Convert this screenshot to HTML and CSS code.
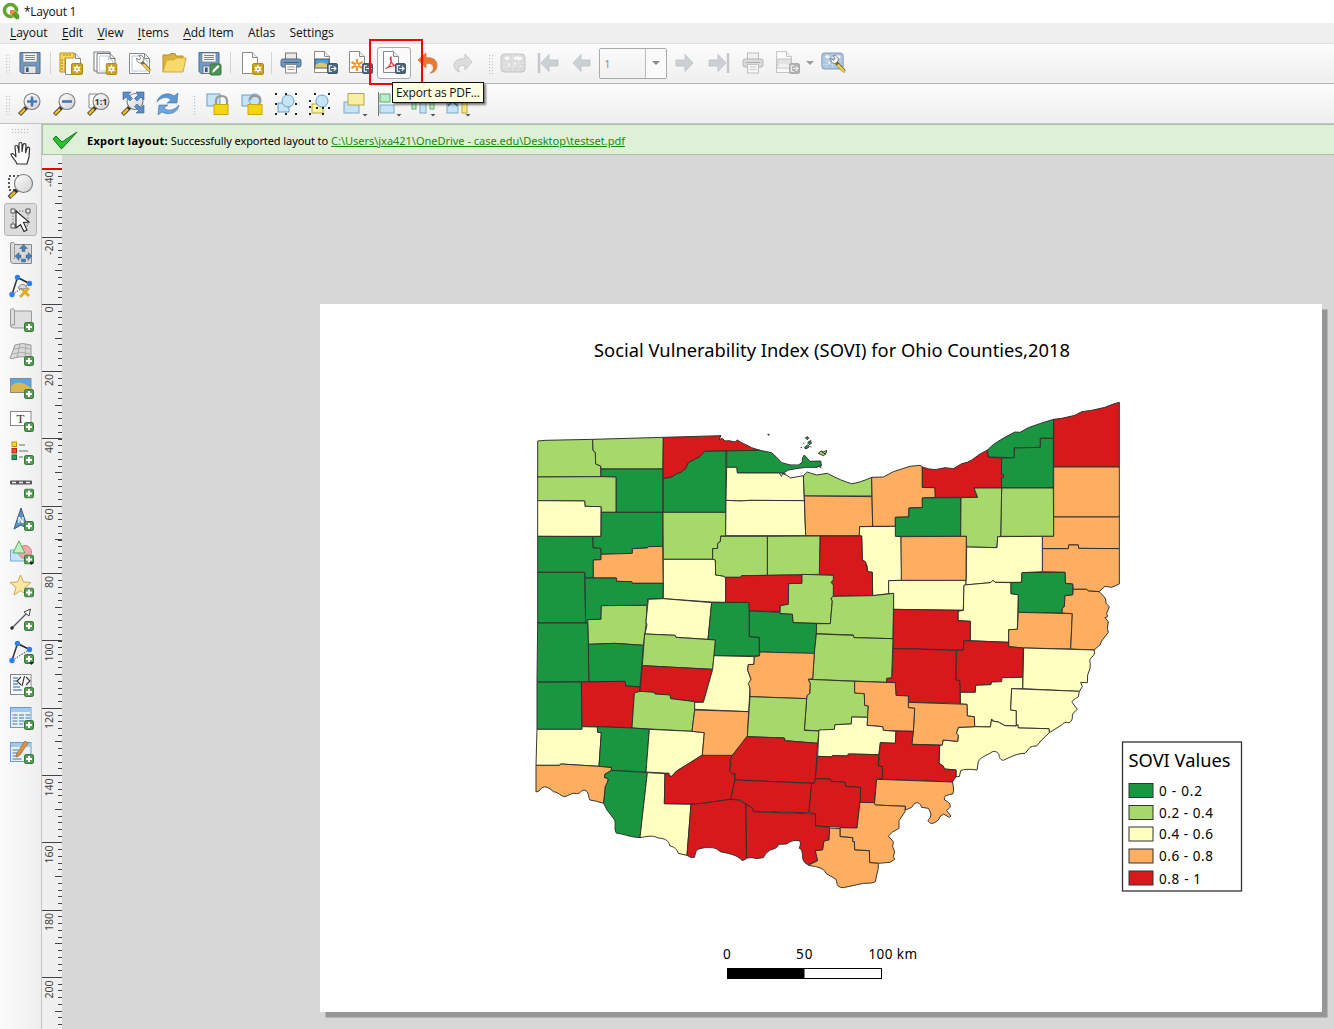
FILE: index.html
```html
<!DOCTYPE html>
<html lang="en">
<head>
<meta charset="utf-8">
<title>*Layout 1</title>
<link rel="stylesheet" href="styles.css">
</head>
<body>
<svg class="defs" width="0" height="0">
  <defs>
    <linearGradient id="glass" x1="0" y1="0" x2="1" y2="1"><stop offset="0" stop-color="#fff"/><stop offset="1" stop-color="#cfcfcf"/></linearGradient>
    <pattern id="dots" width="3" height="3" patternUnits="userSpaceOnUse"><rect width="1.200" height="1.200" fill="#c2c2c2"/></pattern>
    <symbol id="plus" viewBox="0 0 10 10"><rect x=".5" y=".5" width="9" height="9" rx="1.6" fill="#5a9a59" stroke="#39783a"/><path d="M5 2v6M2 5h6" stroke="#fff" stroke-width="2"/></symbol>
    <symbol id="star" viewBox="0 0 12 12"><rect x=".5" y=".5" width="11" height="11" rx="1.5" fill="#c9a31d" stroke="#b28e0e"/><path d="M6 1.6l1.1 2.5 2.8-.3L8.300 6l1.600 2.300-2.800-.3L6 10.500 4.900 8l-2.800.3L3.700 6 2.100 3.800l2.800.3z" fill="#fff"/><circle cx="6" cy="6" r="1" fill="#c9a31d"/></symbol>
    <symbol id="export" viewBox="0 0 12 12"><rect x=".5" y=".5" width="11" height="11" rx="1.8" fill="#49667f" stroke="#334f68"/><path d="M5.500 3H2.500v6h3M4.500 6h5M7.500 3.700L9.900 6 7.500 8.300" fill="none" stroke="#fff" stroke-width="1.200"/></symbol>
    <symbol id="sheet" viewBox="0 0 24 24"><path d="M3.500 1.500h10l5 5v16h-15z" fill="#fff" stroke="#8a8a8a"/><path d="M13.500 1.500v5h5" fill="#eee" stroke="#8a8a8a"/></symbol>
    <symbol id="floppy" viewBox="0 0 24 24"><path d="M2 1.500h20v21H4l-2-2z" fill="#6f9ac6" stroke="#4b6d91"/><rect x="5" y="2" width="14" height="9" fill="#f4f4f4" stroke="#777" stroke-width=".6"/><path d="M7 4.500h10M7 6.500h10M7 8.500h10" stroke="#777" stroke-width=".9"/><rect x="6" y="15" width="12" height="7.500" fill="#e4e4e4" stroke="#666" stroke-width=".7"/><rect x="8" y="16.500" width="2.600" height="4.500" fill="#345a86"/></symbol>
    <symbol id="lens" viewBox="0 0 24 24"><path d="M9 15l-7.500 7.500" stroke="#333" stroke-width="4"/><path d="M7 17l-5 5" stroke="#f2b927" stroke-width="2.500"/><circle cx="14" cy="9.500" r="8" fill="url(#glass)" stroke="#7b7b7b" stroke-width="1.100"/></symbol>
    <symbol id="nav" viewBox="0 0 24 24"><path d="M3 12l8-8.500v5.500h9v6h-9v5.500z" fill="#cbd0d3" stroke="#bbc0c3" stroke-width=".8"/></symbol>
    <symbol id="wrench" viewBox="0 0 24 24"><path d="M9 8l10 11" stroke="#77681f" stroke-width="4.200" stroke-linecap="round"/><path d="M13 13l6 6.500" stroke="#eed35c" stroke-width="2.700" stroke-linecap="round"/><path d="M4 5l3.500 2 1.500-2-2-3.500c4-.5 7 3 5.500 6.500L11 10c-3 2.500-7-.5-7-5z" fill="#f2f2f2" stroke="#666" stroke-width=".9"/></symbol>
    <symbol id="atlas" viewBox="0 0 26 20"><rect x="1" y="1" width="24" height="18" rx="3" fill="currentColor" stroke="#7d8fa0"/><path d="M1.500 6h23M1.500 10h23M1.500 14h23M7 1.500v17M13 1.500v17M19 1.500v17" stroke="#fff" opacity=".5" stroke-width=".6"/><path d="M3.500 4.500l3-1.500 4 .5-1 2.500-2 2-2-1zM8 9.500l3 1-1.500 5-1.500-3zM13 4.500l3-1.500 6 .5.500 2.500-3 2.500-2-1.500-3 .5zM13.500 8.500l3 .5-.5 5-1.500-1.500zM20 12l2.500 1-1 2-2-1z" fill="#fff" stroke="#7d8fa0" stroke-width=".4" opacity=".9"/></symbol>
    <symbol id="printer" viewBox="0 0 24 24"><rect x="6.500" y="2" width="11" height="8" fill="#e9e9e9" stroke="#777"/><rect x="2" y="8" width="20" height="8" rx="2" fill="currentColor" stroke="#55697d"/><path d="M4.500 11.500h15" stroke="#435d7a"/><rect x="6.500" y="13.500" width="11" height="8.500" fill="#fafafa" stroke="#888"/><path d="M8.500 16h7M8.500 18.500h7" stroke="#999"/></symbol>
    <symbol id="nodes" viewBox="0 0 24 24"><path d="M3 20.500L8.500 3.500" stroke="#333" stroke-width="1.500"/><path d="M8.500 3.500l12 6" stroke="#222" stroke-width="1.500"/><path d="M3 20.500l17.500-11" stroke="#444" stroke-dasharray="1.500 1.300"/><g fill="#2d7ef0"><circle cx="8.500" cy="3.500" r="2.700"/><circle cx="20.500" cy="9.500" r="2.700"/><circle cx="3" cy="20.500" r="2.700"/></g></symbol>
  </defs>
</svg>

<header class="title-bar">
  <svg class="logo" viewBox="0 0 18 18"><circle cx="8.500" cy="8.500" r="6" fill="none" stroke="#62a52f" stroke-width="3.600"/><path d="M8 8h4.500l5 5v4.500H14L8 11.500z" fill="#5a9c2c" stroke="#fff" stroke-width=".6"/><path d="M8 8h4l1.500 1.500-4 3.500L8 11.500z" fill="#ef8d2e"/></svg>
  <span>*Layout 1</span>
</header>
<nav class="menu">
  <span><u>L</u>ayout</span><span><u>E</u>dit</span><span><u>V</u>iew</span><span><u>I</u>tems</span><span><u>A</u>dd Item</span><span>Atlas</span><span>Settings</span>
</nav>

<div class="toolbar">
  <svg class="grip" viewBox="0 0 13 22"><path d="M5 1h5v21H5z" fill="url(#dots)"/></svg>
  <b class="btn"><svg viewBox="0 0 24 24"><use href="#floppy"/></svg></b>
  <i class="sep s1"></i>
  <b class="btn"><svg viewBox="0 0 24 24"><use href="#sheet" x="3" y="1"/><path d="M1 2h14v5H6v14H1z" fill="#f7d95f" stroke="#b9931c"/><path d="M5 3v2M8 3v2M11 3v2M2 9h2M2 12h2M2 15h2M2 18h2" stroke="#997b15"/><use href="#star" x="12" y="12" width="12" height="12"/></svg></b>
  <b class="btn"><svg viewBox="0 0 24 24"><path d="M1 1h16v19H1z" fill="#fff" stroke="#777"/><path d="M4 2.500h13l5 5V22H4z" fill="#fff" stroke="#777"/><path d="M6.500 5h9v4h4v11h-13z" fill="none" stroke="#bfd0e4"/><path d="M17 2.500v5h5" fill="none" stroke="#777"/><use href="#star" x="12.500" y="12" width="12" height="12"/></svg></b>
  <b class="btn"><svg viewBox="0 0 24 24"><path d="M1.500 2.500h15l5 5v15h-20z" fill="#fff" stroke="#888"/><path d="M4 5h11v4h4v11H4z" fill="none" stroke="#b3c9e2"/><path d="M16.500 2.500v5h5" fill="none" stroke="#888"/><use href="#wrench" x="5" y="3" width="20" height="20"/></svg></b>
  <b class="btn"><svg viewBox="0 0 24 24"><path d="M1 21V4h6l2-1.500h4L14 5h7v4" fill="#ddb13d" stroke="#b98f28"/><path d="M1 21L4.500 9H12l2-2h10l-3 14z" fill="#f7da6b" stroke="#d3a93a"/></svg></b>
  <b class="btn"><svg viewBox="0 0 24 24"><use href="#floppy"/><rect x="13" y="13" width="11" height="11" rx="1.500" fill="#4f9159" stroke="#39783a"/><path d="M15 22l1-3 5-5 1.500 1.500-5 5z" fill="#fff"/></svg></b>
  <i class="sep s2"></i>
  <b class="btn"><svg viewBox="0 0 24 24"><use href="#sheet" x="-1"/><use href="#star" x="12" y="12" width="12" height="12"/></svg></b>
  <i class="sep s3"></i>
  <b class="btn blue"><svg viewBox="0 0 24 24"><use href="#printer"/></svg></b>
  <b class="btn"><svg viewBox="0 0 24 24"><use href="#sheet" x="-2" y="-1"/><rect x="2" y="8" width="14" height="9" fill="#4aa0dd" stroke="#456"/><path d="M2.500 14q5-5 13 0v2.500h-13z" fill="#e6c65f"/><use href="#export" x="14" y="12" width="11" height="11"/></svg></b>
  <b class="btn"><svg viewBox="0 0 24 24"><use href="#sheet" x="-2" y="-1"/><path d="M9 8v12M3.500 11l11 6M14.500 11l-11 6" stroke="#f79420" stroke-width="2.200"/><circle cx="9" cy="14" r="1.300" fill="#fff"/><use href="#export" x="14" y="12" width="11" height="11"/></svg></b>
  <b class="btn pressed"><svg viewBox="0 0 24 24"><use href="#sheet" x="-2" y="-1"/><path d="M3.500 17.500c4-1 6.500-6 5.500-11.500-1.500 1 0 8.500 6 9-4-.8-8 .5-11.500 2.500z" fill="none" stroke="#e4313b" stroke-width="1.200"/><use href="#export" x="13" y="12" width="11" height="11"/></svg></b>
  <b class="btn"><svg viewBox="0 0 24 24"><path d="M2 9l8-7v4.500c8 0 11 3 11 7.500 0 5-3 8-7 8 3-2 4-4 3-7-1-2-3-3-7-2.500V17z" fill="#e57a35" stroke="#d26320" stroke-width=".6"/></svg></b>
  <b class="btn"><svg viewBox="0 0 24 24"><path d="M21 11l-7-8v4.500C7 7.500 3 10 3 14c0 4 2 6 6 7-2-2-2-4-1-5 1-1.500 3-2 6-1.500V19z" fill="#ddd" stroke="#c9c9c9"/></svg></b>
  <svg class="grip mid" viewBox="0 0 16 22"><path d="M8 1h5v21H8z" fill="url(#dots)"/></svg>
  <b class="btn faded"><svg class="wide" viewBox="0 0 26 20"><use href="#atlas" width="26" height="20"/></svg></b>
  <b class="btn"><svg viewBox="0 0 24 24"><path d="M3 2v20" stroke="#c3c8cb" stroke-width="2.500"/><use href="#nav" x="2"/></svg></b>
  <b class="btn"><svg viewBox="0 0 24 24"><use href="#nav"/></svg></b>
  <span class="combo"><span>1</span><i><em class="tri"></em></i></span>
  <b class="btn"><svg class="flip" viewBox="0 0 24 24"><use href="#nav"/></svg></b>
  <b class="btn"><svg class="flip" viewBox="0 0 24 24"><path d="M3 2v20" stroke="#c3c8cb" stroke-width="2.500"/><use href="#nav" x="2"/></svg></b>
  <b class="btn faded"><svg viewBox="0 0 24 24"><use href="#printer"/></svg></b>
  <b class="btn faded drop"><svg viewBox="0 0 24 24"><use href="#sheet" x="-2" y="-1"/><rect x="2" y="8" width="14" height="9" fill="#ccc" stroke="#888"/><path d="M2.500 15q5-5 13 0v1.500h-13z" fill="#eee"/><use href="#export" x="14" y="12" width="11" height="11"/></svg><em class="tri dark"></em></b>
  <b class="btn sky"><svg class="wide" viewBox="0 0 26 24"><use href="#atlas" x="0" y="1" width="23" height="18"/><use href="#wrench" x="6" y="3" width="21" height="21"/></svg></b>
</div>

<div class="toolbar second">
  <svg class="grip" viewBox="0 0 13 22"><path d="M5 1h5v21H5z" fill="url(#dots)"/></svg>
  <b class="btn"><svg viewBox="0 0 24 24"><use href="#lens"/><path d="M14 4.500v10M9 9.500h10" stroke="#4778b5" stroke-width="2.600"/></svg></b>
  <b class="btn"><svg viewBox="0 0 24 24"><use href="#lens"/><path d="M9 9.500h10" stroke="#4778b5" stroke-width="2.600"/></svg></b>
  <b class="btn"><svg viewBox="0 0 24 24"><path d="M2 2h10v14H2z" fill="#fff" stroke="#888"/><use href="#lens"/><text x="7.500" y="12.800" class="ratio">1:1</text></svg></b>
  <b class="btn"><svg viewBox="0 0 24 24"><use href="#lens"/><g fill="#5b8cc4" stroke="#315f96" stroke-width=".6"><path d="M2 0h8L7.500 2.500l4 4L9 9 5 5 2 8z"/><path d="M23 0h-8l2.500 2.500-4 4L16 9l4-4 3 3z"/><path d="M23 21h-8l2.500-2.500-4-4L16 12l4 4 3-3z"/></g></svg></b>
  <b class="btn"><svg viewBox="0 0 24 24"><path d="M1 10C2 3 12-1 18 4l4-3-1 10H11l4-3C11 4 5 5 1 10z" fill="#5b98d4" stroke="#3d74b1" stroke-width=".6"/><path d="M23 13c-1 8-11 11-17 7l-4 3 1-10h9l-4 3c4 4 11 2 15-3z" fill="#6da5dc" stroke="#3d74b1" stroke-width=".6"/></svg></b>
  <svg class="grip near" viewBox="0 0 15 22"><path d="M7 1h5v21H7z" fill="url(#dots)"/></svg>
  <b class="btn"><svg viewBox="0 0 24 24"><rect x="2" y="2" width="13" height="12" fill="#c5e4f8" stroke="#6a9fc8"/><path d="M11 13V9q0-5 5.500-5T22 9v4" fill="none" stroke="#999" stroke-width="2.200"/><rect x="9" y="12.500" width="14" height="10" fill="#f4d512" stroke="#c9a80f"/></svg></b>
  <b class="btn"><svg viewBox="0 0 24 24"><rect x="2" y="3" width="11" height="11" fill="#c5e4f8" stroke="#6a9fc8"/><circle cx="15" cy="8" r="6" fill="#c5e4f8" stroke="#6a9fc8"/><path d="M10 8q1-5 6-4t4 6l-1 3" fill="none" stroke="#999" stroke-width="2.200"/><rect x="8" y="12.500" width="14" height="10" fill="#f4d512" stroke="#c9a80f"/></svg></b>
  <b class="btn"><svg viewBox="0 0 24 24"><rect x="4" y="11" width="11" height="9" fill="#c5e4f8" stroke="#6a9fc8"/><circle cx="14" cy="9" r="6" fill="#c5e4f8" stroke="#6a9fc8"/><path d="M1 2h2M11 2h2M21 2h2M1 12h2M21 12h2M1 22h2M11 22h2M21 22h2" stroke="#222" stroke-width="1.800"/></svg></b>
  <b class="btn"><svg viewBox="0 0 24 24"><rect x="4" y="12" width="11" height="9" fill="#faf39a" stroke="#b5a64b"/><circle cx="14" cy="9" r="6" fill="#c5e4f8" stroke="#6a9fc8"/><path d="M6 2h2M20 2h2M1 9h2M20 16h2M1 15h2M1 22h2M14 22h2M8 16h2M14 16h2" stroke="#222" stroke-width="1.800"/></svg></b>
  <b class="btn"><svg viewBox="0 0 24 24"><rect x="1" y="10" width="15" height="11" fill="#c5e4f8" stroke="#7fa6bf"/><rect x="5" y="1.500" width="16" height="11.500" fill="#f7f0a0" stroke="#b5a64b"/><path d="M19.500 22h5L22 24.500z" fill="#555"/></svg></b>
  <b class="btn"><svg viewBox="0 0 24 24"><path d="M1.500 0v24" stroke="#777"/><rect x="3" y="2" width="10" height="8" fill="#b9efc4" stroke="#68a577"/><rect x="3" y="13" width="14" height="8" fill="#c5e4f8" stroke="#7fa6bf"/><path d="M19.500 22h5L22 24.500z" fill="#555"/></svg></b>
  <b class="btn"><svg viewBox="0 0 24 24"><rect x="1" y="8" width="4" height="9" fill="#b9efc4" stroke="#68a577"/><rect x="9" y="8" width="6" height="13" fill="#c5e4f8" stroke="#7fa6bf"/><rect x="19" y="8" width="4" height="9" fill="#b9efc4" stroke="#68a577"/><path d="M19.500 22h5L22 24.500z" fill="#555"/></svg></b>
  <b class="btn"><svg viewBox="0 0 24 24"><rect x="1" y="6" width="11" height="15" fill="#c5e4f8" stroke="#7fa6bf"/><path d="M2 14l4.500-5 5 5" fill="none" stroke="#41739f" stroke-width="1.500"/><rect x="16" y="6" width="5" height="15" fill="#f7ea7a" stroke="#b5a64b"/><path d="M19.500 22h5L22 24.500z" fill="#555"/></svg></b>
</div>

<main class="workspace">
  <aside class="tools">
    <svg class="grip-h" viewBox="0 0 18 6"><path d="M0 0h18v5H0z" fill="url(#dots)"/></svg>
    <b><svg viewBox="0 0 24 24"><path d="M8 23c-2-5-6-7-6-10 2-1 4 1 5 3L6 6c0-2 2.500-2 3 0l1 6V3c0-2 3-2 3 0v8l1-7c.5-2 3-1.500 3 0l-.5 8L18 7c1-1.500 3-.5 2.500 1L20 16l-2 7z" fill="#fff" stroke="#333" stroke-width="1.200"/></svg></b>
    <b><svg viewBox="0 0 24 24"><path d="M0 2h12v14H0z" fill="none" stroke="#222" stroke-width="1.500" stroke-dasharray="2 2"/><path d="M8 16l-8 7.500" stroke="#333" stroke-width="4"/><path d="M6 18l-5 5" stroke="#f2b927" stroke-width="2.500"/><circle cx="14.500" cy="9.500" r="9" fill="url(#glass)" stroke="#7b7b7b" stroke-width="1.100"/></svg></b>
    <b class="active"><svg viewBox="0 0 24 24"><path d="M4 3h15v15H4z" fill="none" stroke="#777" stroke-dasharray="1.500 1.500"/><path d="M2 1h4v4H2zM17 1h4v4h-4zM2 16h4v4H2z" fill="#eee" stroke="#555"/><path d="M7 3l13 11-5.500.5L18 22l-3 1.500-3.500-7L7 20z" fill="#fff" stroke="#222" stroke-width="1.100"/></svg></b>
    <b><svg viewBox="0 0 24 24"><path d="M1.500 2q4-2 4 1.500h17v19h-18q-3 0-3-3z" fill="#d9d9d9" stroke="#888"/><path d="M5.500 4v14" stroke="#999"/><path d="M14.500 3.500l4 4H16v3h-3v-3h-2.500zM6 15l4-3.500V14h2v3h-2v2.500zM23 15l-4-3.500V14h-2v3h2v2.500zM12.500 18h4v3h-4z" fill="#4d7eb3" stroke="#37628f" stroke-width=".5"/></svg></b>
    <b><svg viewBox="0 0 24 24"><use href="#nodes"/><path d="M12 14l8 8M20 14l-9 9" stroke="#e2a820" stroke-width="2.800"/><path d="M9 14q3-5 7-3l2 3-4 1z" fill="#ddd" stroke="#888"/></svg></b>
    <b><svg viewBox="0 0 24 24"><path d="M1.500 2.500q4-2 4 1.500h17v17h-18q-3 0-3-3z" fill="#dfdfdf" stroke="#999"/><path d="M5.500 4v14q-3-1-4 1" fill="none" stroke="#999"/><use href="#plus" x="15" y="15" width="10" height="10"/></svg></b>
    <b><svg viewBox="0 0 24 24"><path d="M6 4q7-3 16 0v13q-10-3-20 1-2-2 0-3z" fill="#d9d9d9" stroke="#999"/><path d="M5 8q8-3 17 0M3 13q9-3 19 0M11 3L8 16M17 3l-1 13" fill="none" stroke="#aaa"/><use href="#plus" x="15" y="15" width="10" height="10"/></svg></b>
    <b><svg viewBox="0 0 24 24"><rect x="1.500" y="4.500" width="20.500" height="14" fill="#58a7e3" stroke="#8a8a8a"/><path d="M2 12q8-8 20 2v4H2z" fill="#d9b64e"/><use href="#plus" x="15" y="15" width="10" height="10"/></svg></b>
    <b><svg viewBox="0 0 24 24"><rect x="1.500" y="4.500" width="20.500" height="14" fill="#fff" stroke="#8a8a8a"/><text class="tee" x="7.500" y="16">T</text><use href="#plus" x="15" y="15" width="10" height="10"/></svg></b>
    <b><svg viewBox="0 0 24 24"><g stroke-width="1"><rect x="3" y="2" width="4.500" height="4.500" fill="#fbdc27" stroke="#d28c00"/><rect x="3" y="8.500" width="4.500" height="4.500" fill="#ed5331" stroke="#a92a16"/><rect x="3" y="15" width="4.500" height="4.500" fill="#23a357" stroke="#0d7137"/></g><path d="M10 5h6M10 11h9M10 17h4" stroke="#999" stroke-width="1.500"/><use href="#plus" x="15" y="15" width="10" height="10"/></svg></b>
    <b><svg viewBox="0 0 24 24"><rect x="1" y="6.500" width="22" height="4" rx="1" fill="#555"/><path d="M3 8.500h4M10 8.500h4M17 8.500h4" stroke="#eee" stroke-width="1.600"/><use href="#plus" x="15" y="14.500" width="10" height="10"/></svg></b>
    <b><svg viewBox="0 0 24 24"><path d="M12 1l7 21-7-4-7 4z" fill="#648fba" stroke="#355b83"/><text class="north" x="8.500" y="16">N</text><use href="#plus" x="15" y="14" width="10" height="10"/></svg></b>
    <b><svg viewBox="0 0 24 24"><rect x="1.500" y="10" width="14" height="11" fill="#c5e4f8" stroke="#7aacd0"/><circle cx="16" cy="12" r="6.500" fill="#f3a9a9" stroke="#d47b7b"/><path d="M10 1l6 12H4z" fill="#c3f0c3" stroke="#5aa75e"/><use href="#plus" x="15" y="14.500" width="10" height="10"/><path d="M20 22h5l-2.500 3z" fill="#222"/></svg></b>
    <b><svg viewBox="0 0 24 24"><path d="M11.500 2l3 7 7.500.5-6 5 2 7.500-6.500-4.500L5 22l2-7.500-6-5L8.500 9z" fill="#fae8a4" stroke="#d3a94c"/><use href="#plus" x="15" y="14.500" width="10" height="10"/></svg></b>
    <b><svg viewBox="0 0 24 24"><path d="M3 21L20 4" stroke="#555" stroke-width="1.300"/><circle cx="3" cy="21" r="1.700" fill="#222"/><path d="M15 5l6.500-3-1.500 7z" fill="#fff" stroke="#444"/><use href="#plus" x="15" y="14" width="10" height="10"/></svg></b>
    <b><svg viewBox="0 0 24 24"><use href="#nodes"/><use href="#plus" x="15" y="14" width="10" height="10"/><path d="M20 22h5l-2.500 3z" fill="#222"/></svg></b>
    <b><svg viewBox="0 0 24 24"><rect x="1.500" y="1.500" width="20.500" height="20" fill="#fafafa" stroke="#8a8a8a"/><path d="M4 5h5M4 8h4M4 11h5M4 14h7M4 17h9" stroke="#6392c7" stroke-width="1.500"/><path d="M12 4L8 8l4 4M17 4l4 4-4 4M15.500 3l-2.500 10" fill="none" stroke="#333" stroke-width="1.100"/><use href="#plus" x="15" y="14" width="10" height="10"/></svg></b>
    <b><svg viewBox="0 0 24 24"><rect x="1.500" y="1.500" width="20.500" height="20" fill="#e7f1fa" stroke="#6a9bce"/><path d="M2 2h20v4H2z" fill="#a2c9ec"/><path d="M3.500 9h5M10 9h5M16.500 9H21M3.500 12h5M10 12h5M16.500 12H21M3.500 15h5M10 15h5M3.500 18h5M10 18h4" stroke="#789fc6" stroke-width="1.300"/><use href="#plus" x="15" y="14" width="10" height="10"/></svg></b>
    <b><svg viewBox="0 0 24 24"><rect x="1.500" y="2.500" width="20.500" height="19" fill="#e7f1fa" stroke="#6a9bce"/><path d="M2 3h20v4H2z" fill="#a2c9ec"/><path d="M3.500 10h6M3.500 13h5M3.500 16h6M3.500 19h9" stroke="#789fc6" stroke-width="1.300"/><path d="M7 17l1-4 8-12 3 2-8 12z" fill="#dd9440" stroke="#996126" stroke-width=".7"/><use href="#plus" x="15" y="14" width="10" height="10"/></svg></b>
  </aside>

  <section class="stage">
    <div class="message">
      <svg viewBox="0 0 26 20"><path d="M1 8l3-3 6 6L25 1 9.500 18z" fill="#27c42d" stroke="#14701a"/></svg>
      <p><strong>Export layout:</strong> <span>Successfully exported layout to</span> <a>C:\Users\jxa421\OneDrive - case.edu\Desktop\testset.pdf</a></p>
    </div>
    <div class="view">
      <svg class="ruler" viewBox="42 155 20 874">
        <g class="ticks">
          <path d="M60 162.700V1029" stroke-width="4" stroke-dasharray="1 5.730"/>
          <path d="M58.500 202.900V1029" stroke-width="7" stroke-dasharray="1 66.300"/>
          <path d="M52 236.500V1029" stroke-width="20" stroke-dasharray="1 66.300"/>
        </g>
        <path d="M42 169h20" stroke="#e60000" stroke-width="2"/>
        <g class="marks">
          <text transform="translate(53 171.500) rotate(-90)">-40</text><text transform="translate(53 239.500) rotate(-90)">-20</text><text transform="translate(53 306.500) rotate(-90)">0</text><text transform="translate(53 374) rotate(-90)">20</text><text transform="translate(53 441) rotate(-90)">40</text><text transform="translate(53 508.500) rotate(-90)">60</text><text transform="translate(53 576) rotate(-90)">80</text><text transform="translate(53 643.500) rotate(-90)">100</text><text transform="translate(53 711) rotate(-90)">120</text><text transform="translate(53 778.500) rotate(-90)">140</text><text transform="translate(53 845.500) rotate(-90)">160</text><text transform="translate(53 913) rotate(-90)">180</text><text transform="translate(53 980.500) rotate(-90)">200</text>
        </g>
      </svg>
      <div class="canvas">
        <svg class="page" viewBox="320 304 1002 708">
          <text class="heading" x="594" y="357" textLength="476" lengthAdjust="spacingAndGlyphs">Social Vulnerability Index (SOVI) for Ohio Counties,2018</text>
          <g class="counties">
            <g transform="translate(525 395) scale(.33333)">
              <path class="l" d="M38 138L60 136 203 133 204 166 211 172 212 207 227 213 228 245 38 246z"/>
              <path class="l" d="M203 133L415 127 413 222 228 222 227 213 212 207 211 172 204 166z"/>
              <path class="r" d="M415 127L588 122 582 134 592 130 600 138 612 137 630 141 637 135 651 144 665 150 680 158 705 166 603 168 540 169 525 185 490 203 483 220 468 232 455 236 440 246 415 251z"/>
              <path class="g" d="M415 251L440 246 455 236 468 232 483 220 490 203 525 185 540 169 603 168 603 352 415 352z"/>
              <path class="g" d="M228 222L413 222 413 352 273 352 273 246 228 245z"/>
              <path class="l" d="M38 246L228 245 273 246 273 352 229 352 228 335 180 334 179 318 38 317z"/>
              <path class="y" d="M38 317L179 318 180 334 228 335 228 424 38 424z"/>
              <path class="g" d="M229 352L413 352 413 454 370 455 367 459 322 461 322 475 228 478 227 460 204 459 203 425 228 424z"/>
              <path class="g" d="M38 424L203 425 204 459 227 460 228 494 205 495 205 549 180 549 179 532 38 532z"/>
              <path class="o" d="M228 478L322 475 322 461 367 459 370 455 413 454 415 565 322 565 320 560 275 559 274 549 205 549 205 495 228 494z"/>
              <path class="l" d="M414 352L603 352 602 423 587 423 586 440 578 445 578 460 563 461 563 493 415 493z"/>
              <path class="y" d="M415 493L571 493 572 540 594 543 602 547 602 622 560 621 415 611z"/>
              <path class="g" d="M38 532L179 532 182 681 186 684 38 684z"/>
              <path class="g" d="M180 549L274 549 275 559 320 560 322 565 415 565 413 611 368 612 368 631 229 632 228 673 188 674 186 682 182 681z"/>
              <path class="l" d="M229 632L366 631 363 690 360 715 355 751 270 745 190 748 188 674 228 673z"/>
              <path class="y" d="M370 613L415 611 560 623 549 733 453 727 450 721 360 717 366 690 363 680 368 631z"/>
              <path class="g" d="M38 684L188 684 190 748 192 860 36 861z"/>
              <path class="g" d="M190 748L270 745 355 751 345 875 302 873 300 859 192 860z"/>
              <path class="g" d="M560 623L673 622 673 725 703 727 703 783 567 782 571 735 549 733z"/>
            </g>
            <g transform="translate(525 620) scale(.33333)">
              <path class="l" d="M359 42L450 46 453 52 571 60 563 148 352 137z"/>
              <path class="r" d="M352 137L563 148 535 247 510 245 437 236 435 225 390 222 388 217 345 214z"/>
              <path class="g" d="M36 187L169 186 171 328 36 328z"/>
              <path class="r" d="M169 186L300 184 302 198 345 201 343 217 328 219 321 324 217 320 171 319z"/>
              <path class="l" d="M328 219L345 214 388 217 390 222 435 225 437 236 510 245 509 272 501 334 321 324z"/>
              <path class="y" d="M36 328L171 328 171 320 217 321 218 337 229 338 222 439 107 432 104 436 33 436z"/>
              <path class="g" d="M217 320L321 324 373 328 363 456 260 451 258 442 222 439 229 338 218 337z"/>
              <path class="y" d="M373 328L501 334 538 338 532 406 455 453 440 469 432 468 432 460 363 456z"/>
              <path class="o" d="M33 436L104 436 107 432 222 439 260 443 258 452 240 463 238 472 250 475 248 487 241 500 236 550Q215 543 195 540C188 530 194 515 178 510 165 512 165 525 150 520 140 518 130 528 118 530 102 526 104 518 85 515 74 504 60 496 50 504Q42 516 33 516z"/>
              <path class="g" d="M260 451L367 458 345 653 320 650Q285 640 275 640C266 630 273 615 269 600L246 570 236 550 241 500 251 478 238 472 240 463z"/>
              <path class="y" d="M367 458L420 461 418 551 498 553 486 706 460 700C455 688 450 681 435 678 430 660 420 656 400 654 380 644 365 650 345 653z"/>
              <path class="r" d="M420 461L432 460 432 468 440 469 455 453 530 406 622 406 616 430 614 450 630 460 630 480 617 538 525 551 418 551z"/>
              <path class="r" d="M498 553L525 551 617 538 640 540 663 552 664 716 652 722C640 710 630 703 585 695 575 680 550 683 540 683 510 688 515 690 508 712L496 712 486 706z"/>
              <path class="y" d="M567 107L688 110 687 133 670 134 668 150 678 178 675 205 671 275 509 268 509 247 535 247 563 148z"/>
              <path class="o" d="M509 270L671 275 667 352 622 406 532 406 538 338 501 334z"/>
            </g>
            <g transform="translate(720 395) scale(.33333)">
              <path class="g" d="M20 168L120 166 155 173 170 187 185 203Q210 213 235 210L246 203 248 188 253 180 262 190 270 199 302 198 304 210 290 217 260 217 235 220 205 225 190 234 52 234 50 217 20 217z"/>
              <path class="y" d="M20 217L50 217 52 234 178 234 184 244 188 236Q202 240 212 249L250 242 253 317 90 316 60 318 18 316z"/>
              <path class="y" d="M18 316L60 318 90 316 253 317 257 422 17 422z"/>
              <path class="l" d="M250 242L262 231Q275 236 290 240L322 235Q365 258 395 266 420 263 455 247L456 303 253 303z"/>
              <path class="o" d="M253 303L456 305 458 394 419 395 418 422 257 422z"/>
              <path class="o" d="M455 247L490 246 520 230 570 214 600 211 607 216 607 277 645 278 646 307 607 309 607 338 567 339 566 366 526 367 526 394 458 394z"/>
              <path class="g" d="M607 309L722 308 722 424 526 424 526 367 566 366 567 339 607 338z"/>
              <path class="y" d="M419 395L526 394 526 424 543 425 545 556 506 557 506 596 458 602 457 532 443 530 441 510 427 495 425 423 418 422z"/>
              <path class="r" d="M300 423L425 423 427 495 437 500 443 530 457 532 458 602 340 604 340 570 333 562 340 555 340 541 298 538z"/>
              <path class="l" d="M142 424L300 423 298 538 142 541z"/>
              <path class="l" d="M2 424L142 424 142 541 65 542 62 547 17 547 9 543-13 540-14 495-22 493-22 461-7 460-7 445 1 440z"/>
              <path class="r" d="M17 547L62 547 65 542 246 540 246 565 206 566 205 628 181 632 180 650 88 648 86 622 17 622z"/>
              <path class="l" d="M246 538L340 541 340 555 333 562 340 570 340 604 333 610 337 618 331 686 219 683 217 658 180 656 181 632 205 628 206 566 246 565z"/>
              <path class="g" d="M88 648L180 652 180 656 217 658 219 683 290 686 289 717 283 776 118 771 118 727 88 725z"/>
              <path class="l" d="M340 604L458 602 521 595 519 731 402 728 400 720 289 716 290 686 331 686 337 618 333 610z"/>
              <path class="y" d="M506 557L545 556 738 555 738 570 732 572 730 646 521 643 521 595 506 596z"/>
              <g class="g"><path d="M256 128l7-3 3 5-4 4zM263 144l5-6 5 2 1 5-6 4zM254 157l9-7 5 4-6 6-7 1z"/></g>
              <path class="l" d="M295 175L303 168 310 171 320 166 318 176 310 182z"/>
              <path class="r" d="M143 119l3-2 2 2-3 2z"/>
              <path class="line" d="M242 158l4-1M250 145l3-1M271 155l3 1M270 138l4-1M185 235l12 0M290 217l8-4 7 7M300 218l5-8M306 171l12 7"/>
            </g>
            <g transform="translate(915 395) scale(.33333)">
              <path class="r" d="M22 216Q40 223 60 224L90 218 115 221 140 206Q157 204 170 195L195 177 218 165 220 186 260 189 259 238 266 239 265 247 259 249 260 278 177 279 181 293 188 307 61 307 60 278 22 277z"/>
              <path class="g" d="M218 165Q235 143 300 111L315 112 340 98 380 84 416 73 415 130 376 130 376 157 298 159 298 188 220 186z"/>
              <path class="g" d="M298 188L298 159 376 157 376 130 415 130 415 278 260 278 259 249 266 247 265 239 259 238 260 189z"/>
              <path class="r" d="M416 73L440 70 480 61 500 50 530 46 570 37 595 27 613 22 613 216 416 216z"/>
              <path class="o" d="M416 216L613 216 613 366 416 366z"/>
              <path class="l" d="M260 279L415 279 416 424 257 424z"/>
              <path class="l" d="M177 279L260 279 257 424 248 425 246 458 155 456 154 424 137 424 138 308 188 307z"/>
              <path class="o" d="M416 366L613 366 613 461 491 460 490 450 461 450 460 461 382 461 382 424 416 424z"/>
              <path class="o" d="M382 461L460 461 461 450 490 450 491 460 613 461 613 567 590 577 570 574 552 590 520 588 515 583 475 583 473 567 451 565 450 532 382 530z"/>
              <path class="y" d="M248 425L382 424 382 530 321 533 320 562 240 562 234 556 227 563 153 570 155 456 246 458z"/>
              <path class="o" d="M-42 425L154 424 153 556-41 556z"/>
              <path class="y" d="M147 570L227 563 234 556 240 562 288 563 288 596 310 599 307 703 281 704 281 742 166 737 166 679 129 677 129 648 145 646z"/>
              <path class="g" d="M321 533L450 532 451 565 473 567 473 600 450 602 448 635 442 640 441 654 310 652 310 599 288 596 288 563 320 562z"/>
              <path class="o" d="M310 652L472 656 467 762 326 759 281 755 281 704 307 703z"/>
              <path class="o" d="M473 600L475 583 515 583 520 588 552 590Q565 600 572 612L573 625 583 635 575 655 578 665 570 668 580 680 577 700 580 712 560 738 555 750 537 765 467 762 472 656 441 654 442 640 448 635 450 602z"/>
            </g>
            <g transform="translate(915 620) scale(.33333)">
              <path class="r" d="M-64-32L145-29 129-27 129 2 166 4 166 62 147 62 145 90 0 87-66 86z"/>
              <path class="y" d="M326 84L467 88 537 90Q542 100 535 107 520 118 526 130L525 145 518 165 517 188 497 187 502 200 493 214 323 206z"/>
              <path class="r" d="M147 62L281 67 281 80 325 84 323 172 261 173 260 185 230 186 228 194 182 196 181 217 136 217 134 182 122 180 124 92 145 90z"/>
              <path class="y" d="M261 173L323 172 323 206 290 206 287 270 304 272 304 318 270 317 250 306 232 303 230 297 226 321 179 320 178 290 157 288 156 253 136 252 136 217 181 217 182 196 228 194 230 186 260 185z"/>
              <path class="y" d="M290 206L493 214 490 230C475 240 470 242 472 248L487 268Q474 278 472 285 474 303 462 308 446 305 440 315L403 338 402 326 310 324 308 314 304 318 304 272 287 270z"/>
              <path class="y" d="M130 322L179 320 226 321 230 297 232 303 250 306 270 317 304 318 308 314 310 324 402 326 403 338 380 360 365 378Q350 378 345 382L330 400Q310 398 265 421C250 418 255 408 250 400Q238 388 225 400 192 415 190 425L186 450Q150 445 137 452L133 470 123 470 123 450 88 447 85 438 72 430 74 376 82 375 84 360 128 364 130 345 124 340z"/>
              <path class="r" d="M-66 86L0 87 124 92 122 180 134 182 136 250 0 247-20 247-21 229-57 226-59 190-85 187-85 175-70 173z"/>
              <path class="o" d="M-20 247L156 253 157 288 178 290 179 320 130 322 124 340 130 345 128 364 84 360 82 375-11 373-5 334-1 265-20 263z"/>
            </g>
            <g transform="translate(720 620) scale(.33333)">
              <path class="l" d="M289 42L400 46 402 53 519 56 515 173 500 175 500 187 270 178 278 176 283 100z"/>
              <path class="o" d="M120 96L283 100 278 176 265 178 271 190 270 220 262 226 260 236 90 230 90 205 85 190 93 178 83 150 85 134 102 133 103 110 118 108z"/>
              <path class="l" d="M265 178L404 184 404 219 433 221 434 256 445 258 443 292 395 291 394 312 345 314 343 328 297 333 253 330 260 236 262 226 270 220 271 190z"/>
              <path class="o" d="M404 184L526 188 528 226 565 228 565 263 584 265 580 334 490 331 488 320 441 316 445 258 434 256 433 221 404 219z"/>
              <path class="l" d="M90 230L260 236 253 331 297 333 293 370 195 362 193 354 82 350z"/>
              <path class="y" d="M297 330L343 328 345 314 394 312 395 291 443 292 441 316 488 320 490 331 528 334 526 370 481 368 476 404 385 402 383 408 337 407 335 411 293 409z"/>
              <path class="r" d="M80 350L193 354 195 362 293 370 286 478 283 490 45 480 46 460 37 462 28 450 33 435 30 420 37 406z"/>
              <path class="r" d="M528 334L580 334 576 373 659 376 657 430 670 438 673 447 708 450 708 470 697 486 470 478 488 474 487 440 475 438 481 368 526 370z"/>
              <path class="r" d="M293 409L335 411 337 407 383 408 385 402 476 404 475 438 487 440 488 474 470 478 463 548 420 547 422 502 377 500 375 487 332 484 330 477 286 476z"/>
              <path class="r" d="M45 480L283 490 275 490 267 578 100 575 98 565 78 552 60 540 32 538z"/>
              <path class="r" d="M286 476L330 477 332 484 375 487 377 500 422 502 420 547 411 624 287 618 286 582 267 578 275 490 283 490z"/>
              <path class="r" d="M78 552L98 565 100 575 286 582 287 618 329 622 327 660 312 663 308 690 286 692 293 722 263 734Q245 725 248 705L245 690 238 685Q245 665 237 662 220 660 210 665L200 672 175 673Q175 685 150 690 135 700 130 713 110 718 95 713L80 714z"/>
              <path class="o" d="M470 478L697 486Q704 510 698 522 675 525 673 532L674 540Q695 550 690 562L680 572 693 588 688 592 670 582 660 590Q656 605 635 611 620 605 626 598 640 588 625 565L605 562 Q600 545 585 549L575 562 557 570 556 559 463 555z"/>
              <path class="o" d="M420 547L463 548 466 555 556 559 555 575 537 602 537 625Q515 635 505 648L520 665 518 680 524 695 520 710 524 718 510 727 475 730 449 728 448 692 404 690 403 665 398 665 398 653 360 650 360 623 411 624z"/>
              <path class="o" d="M329 624L360 626 360 650 398 653 398 665 403 665 404 690 448 692 449 728 475 730Q476 750 470 765L466 785Q460 790 430 790L370 803Q350 803 350 785L348 778 318 760Q315 742 265 736L293 722 286 692 308 690 312 663 327 660z"/>
            </g>
          </g>
          <g class="legend">
            <rect class="frame" x="1122.500" y="742" width="119" height="149"/>
            <text class="legend-title" x="1128.500" y="767" textLength="102" lengthAdjust="spacingAndGlyphs">SOVI Values</text>
            <rect class="g" x="1129" y="783.500" width="24" height="14"/><text x="1159" y="795.500" textLength="43">0 - 0.2</text>
            <rect class="l" x="1129" y="805.500" width="24" height="14"/><text x="1159" y="817.500" textLength="54">0.2 - 0.4</text>
            <rect class="y" x="1129" y="827" width="24" height="14"/><text x="1159" y="839" textLength="54">0.4 - 0.6</text>
            <rect class="o" x="1129" y="849" width="24" height="14"/><text x="1159" y="861" textLength="54">0.6 - 0.8</text>
            <rect class="r" x="1129" y="871" width="24" height="14"/><text x="1159" y="883.500" textLength="42">0.8 - 1</text>
          </g>
          <g class="scale">
            <text x="723" y="959">0</text><text x="796" y="959" textLength="16.500">50</text><text x="868.500" y="959" textLength="48.500">100 km</text>
            <rect x="727.500" y="968.500" width="154" height="10" fill="#fff" stroke="#000"/><rect x="727" y="968" width="77.500" height="11"/>
          </g>
        </svg>
      </div>
    </div>
  </section>
</main>

<div class="callout"></div>
<div class="tooltip">Export as PDF...</div>
</body>
</html>
```
FILE: styles.css
```css
* { box-sizing: border-box; }
body { margin: 0; width: 1334px; height: 1029px; overflow: hidden; display: flex; flex-direction: column; background: #f0f0f0; color: #111; font: 12px "Open Sans", sans-serif; }
.defs { position: absolute; }
.title-bar { height: 23px; flex: none; background: #fff; display: flex; align-items: center; gap: 4px; padding: 0 0 1px 2px; letter-spacing: -0.25px; }
.logo { width: 18px; height: 18px; }
.menu { height: 21px; flex: none; display: flex; align-items: center; gap: 14.4px; padding: 0 0 1px 10px; border-bottom: 1px solid #e3e3e3; letter-spacing: -0.05px; }
.menu u { text-underline-offset: 2px; }

.toolbar { height: 40px; flex: none; display: flex; align-items: center; padding-bottom: 1px; background: linear-gradient(#fcfcfc, #efefef); border-bottom: 1px solid #b4b4b4; }
.toolbar.second { padding-bottom: 0; border-bottom-color: #c2c2c2; }
.grip { width: 12.8px; height: 22px; flex: none; }
.grip.mid { width: 16px; }
.grip.near { width: 15px; }
.second .grip:first-child { width: 13px; }
.btn { width: 34.4px; height: 32px; flex: none; display: flex; align-items: center; justify-content: center; }
.btn svg { width: 24px; height: 24px; overflow: visible; }
.btn svg.wide { width: 26px; }
.btn .flip { transform: scaleX(-1); }
.blue { color: #6e98c3; }
.sky { color: #a9c8e8; }
.faded { color: #bbb; opacity: .45; filter: grayscale(1); }
.pressed { background: #fbfbfb; border: 1px solid #aaa; border-radius: 3px; }
.sep { height: 22px; flex: none; background: linear-gradient(#d4d4d4, #d4d4d4) center / 1px 100% no-repeat; }
.s1 { width: 6.6px; }
.s2 { width: 9px; }
.s3 { width: 4.6px; }
.tri { width: 0; height: 0; border: 4px solid transparent; border-top-color: #8b8b8b; border-bottom: 0; }
.tri.dark { border-top-color: #333; }
.combo { width: 68px; height: 31px; flex: none; display: flex; border: 1px solid #aaa; border-radius: 2px; color: #9b8b7b; font: 11px "Noto Sans", sans-serif; }
.combo span { flex: 1; display: flex; align-items: center; padding-left: 4px; }
.combo i { width: 21px; border-left: 1px solid #bbb; background: #fafafa; display: flex; align-items: center; justify-content: center; }
.btn.drop { width: 46px; gap: 7px; padding-left: 3px; }
.ratio { font: bold 9px "Open Sans", sans-serif; fill: #333; }

.workspace { flex: 1; min-height: 0; display: flex; }
.tools { width: 42px; flex: none; display: flex; flex-direction: column; align-items: center; background: linear-gradient(90deg, #fbfbfb, #eee); border-right: 1.500px solid #c6c6c6; padding-top: 5px; }
.grip-h { width: 18px; height: 6px; flex: none; margin-bottom: 1.500px; }
.tools b { width: 33px; height: 33.25px; flex: none; display: flex; align-items: center; justify-content: center; }
.tools b.active { background: #dcdcdc; border: 1px solid #b5b5b5; border-radius: 3px; }
.tools b svg { width: 24px; height: 24px; overflow: visible; }
.tee { font: 13px "Liberation Serif", serif; fill: #333; }
.north { font: bold 8px "Open Sans", sans-serif; fill: #fff; }

.stage { flex: 1; min-width: 0; display: flex; flex-direction: column; }
.message { height: 31px; flex: none; display: flex; align-items: center; gap: 9px; padding: 2px 0 0 9px; background: #dff0d8; border: 1px solid #a9c4a2; border-width: 1px 0 1px 1px; font: 11px "Noto Sans", sans-serif; color: #000; }
.message svg { width: 26px; height: 20px; }
.message p { margin: 0; display: flex; gap: 3px; white-space: nowrap; letter-spacing: -0.09px; }
.message strong { letter-spacing: 0.28px; }
.message a { color: #168a0e; letter-spacing: -0.02px; text-decoration: underline; text-underline-offset: 1px; }
.view { flex: 1; min-height: 0; display: flex; background: #d7d7d7; overflow: hidden; }
.ruler { width: 20px; height: 874px; flex: none; background: #f0f0f0; }
.ticks { fill: none; stroke: #444; shape-rendering: crispEdges; }
.marks { font: 10.5px "Noto Sans", sans-serif; fill: #444; text-anchor: end; }
.canvas { padding: 149px 0 0 258px; }
.page { display: block; width: 1002px; height: 708px; background: #fff; box-shadow: 5.5px 5.5px 0 #969696; font-family: "Noto Sans", sans-serif; }
.page text { fill: #000; }
.heading { font-size: 18.5px; }
.counties { stroke: #2f2f2f; stroke-width: 2.900; stroke-linejoin: round; }
.g { fill: #1a9641; }
.l { fill: #a6d96a; }
.y { fill: #ffffc0; }
.o { fill: #fdae61; }
.r { fill: #d7191c; }
.line { fill: none; }
.legend rect { stroke: #333; stroke-width: 1; }
.legend .frame { fill: #fff; stroke-width: 1.300; }
.legend text { font-size: 13.5px; }
.legend .legend-title { font-size: 18px; }
.scale text { font-size: 13.5px; }

.callout { position: absolute; left: 369px; top: 39px; width: 54px; height: 46px; border: 2px solid #f00; }
.tooltip { position: absolute; left: 392px; top: 82px; width: 92px; height: 21px; padding: 0 0 1px 3px; display: flex; align-items: center; background: #ffffe1; border: 1px solid #111; box-shadow: 2px 2px 2px rgba(0, 0, 0, .5); letter-spacing: -0.2px; white-space: nowrap; }
```
